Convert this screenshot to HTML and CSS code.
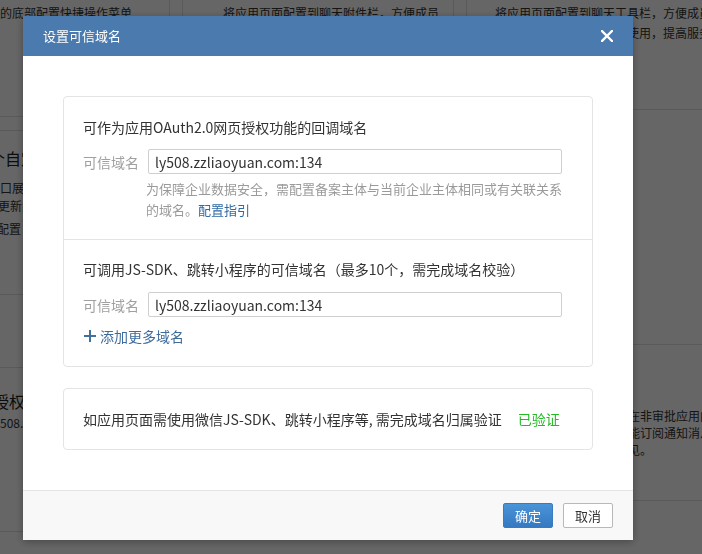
FILE: index.html
```html
<!DOCTYPE html>
<html lang="zh-CN">
<head>
<meta charset="utf-8">
<title>设置可信域名</title>
<link rel="stylesheet" href="styles.css">
</head>
<body>
<div class="page">
  <div class="col col-a">
    <div class="bcard bc-a1"><p class="btext">的底部配置快捷操作菜单</p></div>
    <div class="bcard bc-a2">
      <h3 class="bhead">个自定义菜单</h3>
      <p class="btext">口展示应用菜单</p>
      <p class="btext shift-2">更新内容</p>
      <p class="btext shift-3 btext-gap">配置</p>
    </div>
    <div class="bcard bc-a3">
      <h3 class="bhead">授权方</h3>
      <p class="btext">508.zzliaoyuan.com</p>
    </div>
  </div>
  <div class="col col-b">
    <div class="bcard bc-b1"><p class="btext">将应用页面配置到聊天附件栏，方便成员</p></div>
    <div class="bcard bc-b2"></div>
  </div>
  <div class="col col-c">
    <div class="bcard bc-c1">
      <p class="btext">将应用页面配置到聊天工具栏，方便成员</p>
      <p class="btext">员在会话中快速打开应用使用，提高服务效率</p>
    </div>
    <div class="bcard bc-c2"></div>
    <div class="bcard bc-c3">
      <p class="btext">在非审批应用内</p>
      <p class="btext">能订阅通知消息</p>
      <p class="btext">见。</p>
    </div>
  </div>
</div>

<div class="mask"></div>

<div class="modal">
  <div class="modal-header">
    <span class="modal-title">设置可信域名</span>
    <svg class="close" width="12" height="12" viewBox="0 0 12 12"><path d="M1 1 L11 11 M11 1 L1 11" stroke="#fff" stroke-width="2.4" stroke-linecap="square"/></svg>
  </div>
  <div class="modal-body">
    <div class="card">
      <div class="section section-1">
        <div class="sec-title">可作为应用OAuth2.0网页授权功能的回调域名</div>
        <div class="field">
          <span class="label">可信域名</span>
          <input class="input" type="text" value="ly508.zzliaoyuan.com:134">
        </div>
        <div class="hint">为保障企业数据安全，需配置备案主体与当前企业主体相同或有关联关系<br>的域名。<a class="link">配置指引</a></div>
      </div>
      <div class="section section-2">
        <div class="sec-title">可调用JS-SDK、跳转小程序的可信域名（最多10个，需完成域名校验）</div>
        <div class="field">
          <span class="label">可信域名</span>
          <input class="input" type="text" value="ly508.zzliaoyuan.com:134">
        </div>
        <div class="add-more">
          <svg width="12" height="12" viewBox="0 0 12 12"><path d="M6 0 V12 M0 6 H12" stroke="#41709f" stroke-width="2"/></svg>
          <span>添加更多域名</span>
        </div>
      </div>
    </div>
    <div class="card card-2">
      <span>如应用页面需使用微信JS-SDK、跳转小程序等, 需完成域名归属验证</span>
      <span class="verified">已验证</span>
    </div>
  </div>
  <div class="modal-footer">
    <button class="btn btn-primary">确定</button>
    <button class="btn btn-default">取消</button>
  </div>
</div>
</body>
</html>
```
FILE: styles.css
```css
* { box-sizing: border-box; }
html, body {
  margin: 0;
  padding: 0;
  width: 702px;
  height: 554px;
  overflow: hidden;
  background: #fff;
  font-family: "Noto Sans CJK SC", "Microsoft YaHei", sans-serif;
  color: #333;
}

/* background page */
.page {
  display: flex;
  gap: 12px;
  width: 702px;
  height: 554px;
  overflow: hidden;
}
.col {
  display: flex;
  flex-direction: column;
  gap: 13px;
  flex: none;
}
.col-a { width: 170px; }
.col-b { width: 272px; }
.col-c { width: 260px; }
.bcard {
  border: 1px solid #e0e0e0;
  border-top: none;
}
.bc-a1 { height: 117px; padding-top: 3px; border-left: none; }
.bc-a2 { height: 165px; border-left: none; border-top: 1px solid #e0e0e0; padding-top: 15px; }
.bc-a3 { height: 165px; margin-top: 59px; padding-top: 21px; border-top: 1px solid #e0e0e0; border-left: none; }
.bc-b1 { height: 117px; padding: 3px 0 0 40px; }
.bc-b2 { height: 300px; }
.bc-c1 { height: 110px; padding: 3px 0 0 28px; border-right: none; }
.bc-c2 { height: 235px; margin-top: -13px; border-right: none; }
.bc-c3 { height: 156px; margin-top: -13px; padding: 62px 0 0 161px; border-right: none; }
.btext {
  margin: 0;
  font-size: 12px;
  line-height: 20px;
  color: #333;
  white-space: nowrap;
}
.bc-a2 .btext { line-height: 18px; }
.bc-a2 .bhead { margin: 0 0 9px -11px; }
.bc-a3 .bhead { margin: 0 0 0 -7px; }
.shift-2 { margin-left: -2px; }
.shift-3 { margin-left: -3px; }
.bc-c3 .btext { line-height: 17px; }
.btext-gap { margin-top: 5px; }
.bhead {
  font-size: 16px;
  font-weight: normal;
  line-height: 24px;
  color: #222;
  white-space: nowrap;
}

/* overlay */
.mask {
  position: fixed;
  inset: 0;
  background: rgba(0, 0, 0, 0.6);
}

/* modal */
.modal {
  position: fixed;
  left: 23px;
  top: 16px;
  width: 610px;
  background: #fff;
  box-shadow: 0 2px 8px rgba(0, 0, 0, 0.3);
}
.modal-header {
  height: 40px;
  background: #4a7aae;
  display: flex;
  align-items: center;
  justify-content: space-between;
  padding: 0 20px;
}
.modal-title {
  color: #fff;
  font-size: 13px;
  line-height: 20px;
}
.close { display: block; }

.modal-body {
  padding: 40px;
}
.card {
  border: 1px solid #e4e4e4;
  border-radius: 4px;
}
.section {
  padding: 19px;
}
.section-1 {
  border-bottom: 1px solid #e4e4e4;
}
.section-2 {
  padding-top: 18px;
  padding-bottom: 20px;
}
.sec-title {
  font-size: 14px;
  line-height: 22px;
  color: #333;
  margin-bottom: 11px;
  white-space: nowrap;
}
.section-2 .sec-title { margin-bottom: 12px; }
.field {
  display: flex;
  align-items: center;
  height: 25px;
}
.label {
  width: 65px;
  flex: none;
  font-size: 14px;
  color: #a0a0a0;
  line-height: 20px;
}
.input {
  width: 414px;
  height: 25px;
  border: 1px solid #cfcfcf;
  border-radius: 2px;
  padding: 0 6px;
  margin: 0;
  font-family: "Noto Sans CJK SC", "Microsoft YaHei", sans-serif;
  font-size: 14px;
  color: #333;
  background: #fff;
  outline: none;
}
.hint {
  margin: 4px 0 0 63px;
  font-size: 13px;
  line-height: 21px;
  color: #9a9a9a;
  white-space: nowrap;
}
.link {
  color: #2e6aa6;
  text-decoration: none;
}
.add-more {
  margin-top: 9px;
  display: flex;
  align-items: center;
  gap: 4px;
  height: 20px;
  padding-left: 1px;
  font-size: 14px;
  color: #3d6b9c;
}
.add-more svg { display: block; }

.card-2 {
  margin-top: 21px;
  padding: 19px;
  font-size: 14px;
  line-height: 22px;
  color: #333;
  white-space: nowrap;
}
.verified {
  color: #22bb22;
  margin-left: 13px;
}

.modal-footer {
  height: 50px;
  border-top: 1px solid #e5e5e5;
  background: #f8f8f8;
  display: flex;
  align-items: center;
  justify-content: flex-end;
  gap: 10px;
  padding-right: 20px;
}
.btn {
  width: 50px;
  height: 25px;
  padding: 0;
  border-radius: 2px;
  font-family: "Noto Sans CJK SC", "Microsoft YaHei", sans-serif;
  font-size: 13px;
  line-height: 23px;
  cursor: pointer;
}
.btn-primary {
  color: #fff;
  border: 1px solid #3a7bc0;
  background: linear-gradient(#4a94d9, #3479c2);
}
.btn-default {
  color: #333;
  border: 1px solid #b8b8b8;
  background: #fff;
}
```
